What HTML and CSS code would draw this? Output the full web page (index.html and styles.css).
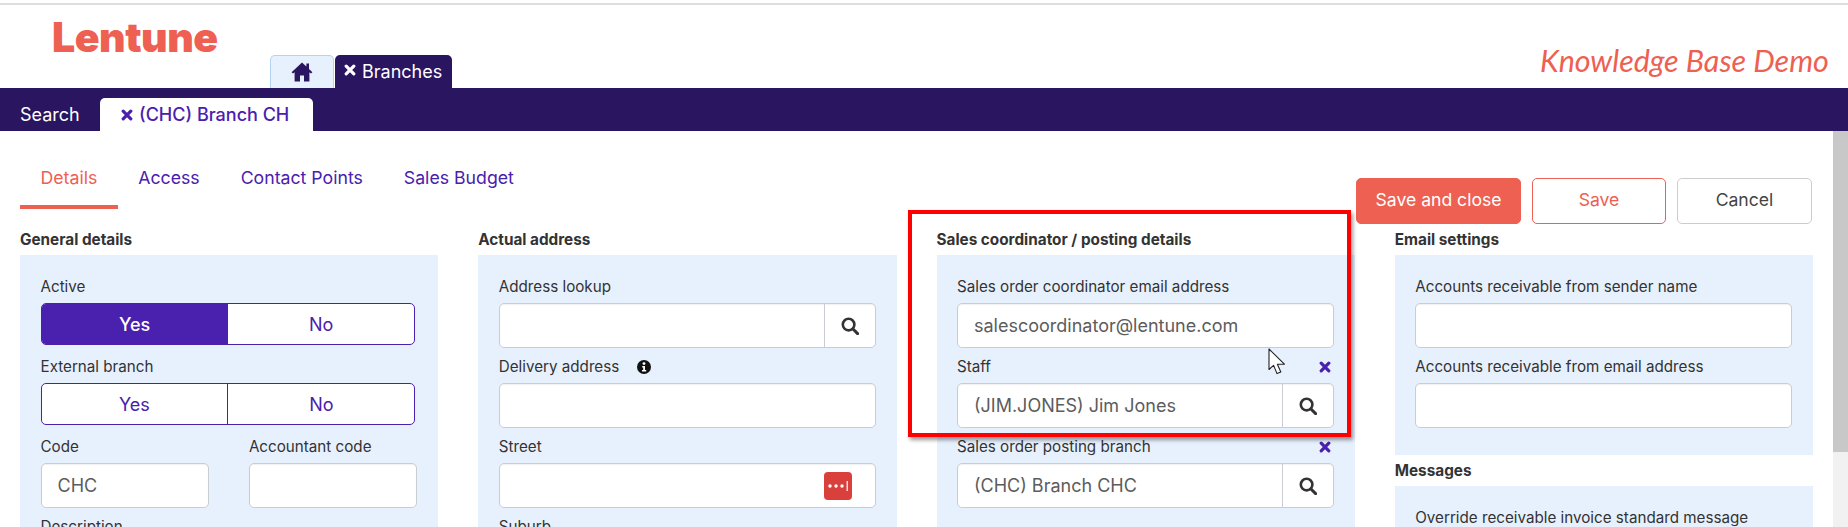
FILE: index.html
```html
<!DOCTYPE html>
<html lang="en">
<head>
<meta charset="utf-8">
<title>Lentune</title>
<link rel="stylesheet" href="styles.css">
</head>
<body>
<svg class="defs" width="0" height="0" aria-hidden="true">
  <symbol id="i-search" viewBox="0 0 18 18"><circle cx="7.6" cy="7.6" r="5.8" fill="none" stroke="currentColor" stroke-width="2.6"/><path d="M12 12 16.6 16.6" stroke="currentColor" stroke-width="3" stroke-linecap="round"/></symbol>
  <symbol id="i-x" viewBox="0 0 12 12"><path d="M2.2 2.2 9.8 9.8M9.8 2.2 2.2 9.8" stroke="currentColor" stroke-width="3.2" stroke-linecap="round"/></symbol>
</svg>
<div class="topline"></div>
<header class="masthead">
  <div class="logo">Lentune</div>
  <nav class="apptabs">
    <a class="apptab home"><svg width="22" height="20" viewBox="0 0 22 20"><path d="M11 0.5 0.6 10.2 2 11.6 3.6 10.2V19.5H9V13.5H13V19.5H18.4V10.2L20 11.6 21.4 10.2 18 7V1.5H15.4V4.6Z" fill="currentColor"/></svg></a>
    <a class="apptab current"><svg class="x" width="12" height="12"><use href="#i-x"/></svg>Branches</a>
  </nav>
  <div class="demo">Knowledge Base Demo</div>
</header>
<div class="pagebar">
  <a class="pagetab">Search</a>
  <a class="pagetab active"><svg class="x" width="12" height="12"><use href="#i-x"/></svg><span>(CHC) Branch CH</span></a>
</div>
<div class="body">
  <main class="content">
    <div class="toolbar">
      <ul class="subtabs">
        <li class="subtab on">Details</li>
        <li class="subtab">Access</li>
        <li class="subtab">Contact Points</li>
        <li class="subtab">Sales Budget</li>
      </ul>
      <div class="actions">
        <button class="btn primary">Save and close</button>
        <button class="btn outline">Save</button>
        <button class="btn plain">Cancel</button>
      </div>
    </div>
    <div class="columns">
      <section>
        <h2>General details</h2>
        <div class="panel">
          <div class="field"><div class="label">Active</div>
            <div class="toggle"><span class="opt sel">Yes</span><span class="opt">No</span></div></div>
          <div class="field"><div class="label">External branch</div>
            <div class="toggle"><span class="opt split">Yes</span><span class="opt">No</span></div></div>
          <div class="pair">
            <div class="field"><div class="label">Code</div><div class="input">CHC</div></div>
            <div class="field"><div class="label">Accountant code</div><div class="input"></div></div>
          </div>
          <div class="field"><div class="label">Description</div><div class="input"></div></div>
        </div>
      </section>
      <section>
        <h2>Actual address</h2>
        <div class="panel">
          <div class="field"><div class="label">Address lookup</div>
            <div class="input lookup"><span class="val"></span><span class="addon"><svg width="18" height="18"><use href="#i-search"/></svg></span></div></div>
          <div class="field"><div class="label">Delivery address<svg class="info" width="14" height="14" viewBox="0 0 14 14"><circle cx="7" cy="7" r="7" fill="#111"/><circle cx="7" cy="3.6" r="1.4" fill="#fff"/><path d="M5.2 6H8V10H9.2V11.4H5V10H6.2V7.4H5.2Z" fill="#fff"/></svg></div><div class="input"></div></div>
          <div class="field"><div class="label">Street</div>
            <div class="input pw"><span class="pwicon"><svg width="24" height="12" viewBox="0 0 24 12"><circle cx="4" cy="6" r="1.7" fill="#fff"/><circle cx="10" cy="6" r="1.7" fill="#fff"/><circle cx="16" cy="6" r="1.7" fill="#fff"/><rect x="20.6" y="1" width="1.2" height="10" fill="#fff"/></svg></span></div></div>
          <div class="field"><div class="label">Suburb</div><div class="input"></div></div>
        </div>
      </section>
      <section>
        <h2>Sales coordinator / posting details</h2>
        <div class="panel tall">
          <div class="field"><div class="label">Sales order coordinator email address</div><div class="input">salescoordinator@lentune.com</div></div>
          <div class="field"><div class="label"><span>Staff</span><svg class="clear" width="12" height="12"><use href="#i-x"/></svg></div>
            <div class="input lookup"><span class="val">(JIM.JONES) Jim Jones</span><span class="addon"><svg width="18" height="18"><use href="#i-search"/></svg></span></div></div>
          <div class="field"><div class="label"><span>Sales order posting branch</span><svg class="clear" width="12" height="12"><use href="#i-x"/></svg></div>
            <div class="input lookup"><span class="val">(CHC) Branch CHC</span><span class="addon"><svg width="18" height="18"><use href="#i-search"/></svg></span></div></div>
        </div>
      </section>
      <section>
        <h2>Email settings</h2>
        <div class="panel">
          <div class="field"><div class="label">Accounts receivable from sender name</div><div class="input"></div></div>
          <div class="field"><div class="label">Accounts receivable from email address</div><div class="input"></div></div>
        </div>
        <h2>Messages</h2>
        <div class="panel">
          <div class="field"><div class="label">Override receivable invoice standard message</div><div class="input"></div></div>
        </div>
      </section>
    </div>
  </main>
  <div class="scrollbar"><div class="thumb"></div></div>
</div>
<div class="highlight"></div>
<svg class="cursor" width="20" height="28" viewBox="0 0 20 28"><path d="M1 1V21.5L5.6 17.4 9 25.6 12.8 24 9.4 16.2H16.4Z" fill="#fff" stroke="#222" stroke-width="1.1" stroke-linejoin="round"/></svg>
</body>
</html>
```
FILE: styles.css
```css
* { box-sizing: border-box; }
html, body { margin: 0; height: 527px; overflow: hidden; background: #fff; }
body { font-family: "Inter", "Noto Sans", sans-serif; font-size: 15px; color: #333; position: relative; display: flex; flex-direction: column; }
.defs { position: absolute; }
.topline { height: 5px; flex: none; border-top: 3px solid #fff; background: #ddd; }

.masthead { height: 83px; flex: none; display: flex; align-items: flex-end; position: relative; }
.logo { font-family: "Inter", sans-serif; font-weight: 900; font-size: 41px; line-height: 46px; color: #ee6052; letter-spacing: -0.5px; margin: 0 53px 28px 52px; width: 165px; }
.apptabs { display: flex; gap: 1px; height: 33px; }
.apptab { display: flex; align-items: center; border-radius: 5px 5px 0 0; font-size: 18px; }
.apptab.home { width: 64px; justify-content: center; background: #e7f1fe; border: 1px solid #b5d3f3; border-bottom: 0; color: #2a1560; }
.apptab.current { width: 117px; background: #2a1560; color: #fff; padding-left: 9px; gap: 6px; }
.apptab .x { flex: none; margin-top: -4px; }
.demo { margin-left: auto; margin-right: 20px; margin-bottom: 10px; width: 288px; font-family: "Lato", sans-serif; font-style: italic; font-size: 30.4px; line-height: 36px; color: #ee6052; white-space: nowrap; }

.pagebar { height: 43px; flex: none; background: #2a1560; display: flex; align-items: flex-end; padding-left: 20px; }
.pagetab { color: #fff; font-size: 18px; height: 33px; display: flex; align-items: center; width: 80px; }
.pagetab.active { width: 213px; background: #fff; color: #4a20ae; font-weight: 500; border-radius: 5px 5px 0 0; padding-left: 21px; gap: 6px; }
.pagetab.active .x { flex: none; }

.body { flex: 1; display: flex; min-height: 0; }
.content { flex: 1; min-width: 0; overflow: hidden; padding: 0 20px; }
.scrollbar { width: 15px; flex: none; background: #f1f1f1; }
.thumb { height: 321px; background: #c8c8c8; }

.toolbar { height: 93px; display: flex; justify-content: space-between; }
.subtabs { list-style: none; margin: 33px 0 0; padding: 0; display: flex; height: 45px; }
.subtab { padding: 0 20.5px; line-height: 28px; color: #4a20ae; font-size: 17.7px; }
.subtab.on { color: #ee6052; border-bottom: 4px solid #ee6052; }
.actions { display: flex; align-items: flex-end; gap: 11px; margin-right: 1px; }
.btn { height: 46px; border-radius: 5px; font: 17.6px/42px "Inter", sans-serif; border: 1px solid; background: #fff; padding: 0 0 2px; }
.btn.primary { width: 165px; background: #ee6052; border-color: #ee6052; color: #fff; }
.btn.outline { width: 134px; border-color: #ee6052; color: #ee6052; }
.btn.plain { width: 135px; border-color: #ccc; color: #444; }

.columns { display: grid; grid-template-columns: repeat(4, 1fr); column-gap: 40px; }
h2 { margin: 0; height: 31px; display: flex; align-items: center; font-size: 15.3px; font-weight: 650; color: #333; }
.panel { background: #e7f1fe; padding: 20px 21px 20px 20.5px; }
.panel.tall { min-height: 280px; }
.field { margin-bottom: 7px; }
.label { height: 24px; line-height: 24px; margin-bottom: 4px; font-size: 15.2px; color: #333; display: flex; align-items: center; justify-content: space-between; white-space: nowrap; }
.label .info { margin: 0 auto 0 18px; }
.label .clear { color: #4a20ae; margin-right: 3px; }
.input { height: 45px; background: #fff; border: 1px solid #c9cdd2; border-radius: 5px; box-shadow: inset 0 1px 1px rgba(0,0,0,.06); padding-left: 16px; display: flex; align-items: center; font-size: 18px; color: #5c5c5c; }
.input.lookup { padding-left: 0; }
.val { flex: 1; padding-left: 16px; white-space: nowrap; }
.addon { width: 51px; height: 100%; flex: none; border-left: 1px solid #c9cdd2; display: flex; align-items: center; justify-content: center; color: #333; }
.input.pw { justify-content: flex-end; padding-right: 23px; }
.pwicon { width: 28px; height: 28px; border-radius: 4px; background: #d9403c; display: flex; align-items: center; justify-content: center; }
.pair { display: grid; grid-template-columns: 1fr 1fr; column-gap: 40px; }
.toggle { height: 42px; display: flex; border: 1px solid #4a20ae; border-radius: 5px; overflow: hidden; background: #fff; margin: 0 2px 10px 0; font-size: 18px; }
.opt { flex: 1; display: flex; align-items: center; justify-content: center; color: #4a20ae; }
.opt.sel { background: #4a20ae; color: #fff; font-weight: 500; }
.opt.split { border-right: 1px solid #4a20ae; }

.highlight { position: absolute; left: 908px; top: 210px; width: 443px; height: 227px; border: 4px solid #f00; box-shadow: 2px 3px 4px rgba(0,0,0,.4); pointer-events: none; }
.cursor { position: absolute; left: 1268px; top: 348px; }
```
